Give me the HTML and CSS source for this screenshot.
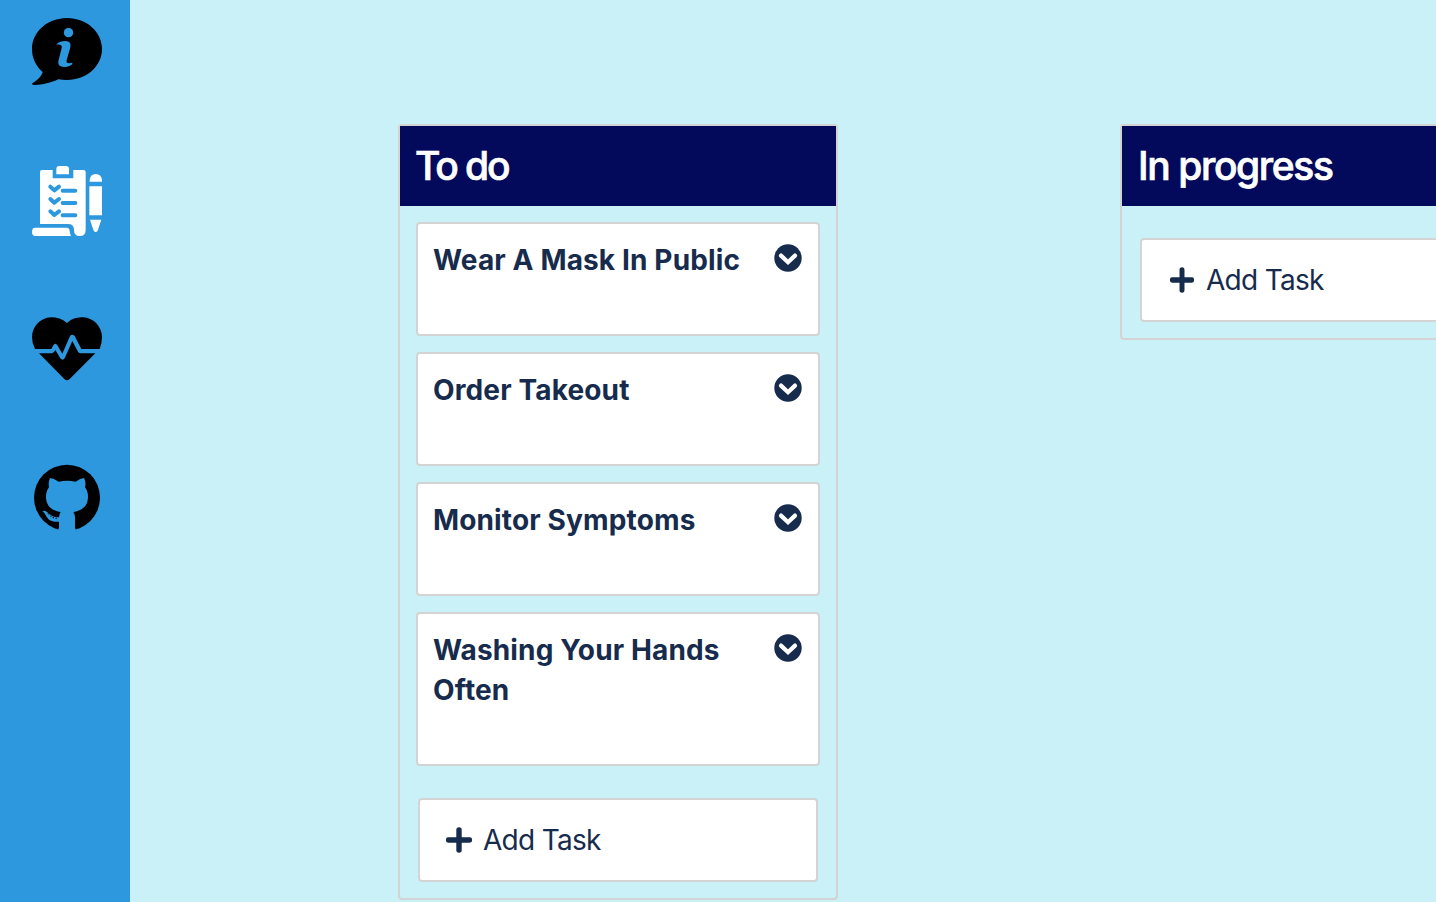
FILE: index.html
```html
<!DOCTYPE html>
<html lang="en">
<head>
<meta charset="utf-8">
<title>Tasks</title>
<link rel="stylesheet" href="styles.css">
</head>
<body>
<svg class="sprite" aria-hidden="true">
  <symbol id="chevron" viewBox="0 0 28 28">
    <circle cx="14" cy="14" r="13.7" fill="#172b4d"/>
    <path d="M7 11.6 14 18.2 21 11.6" fill="none" stroke="#fff" stroke-width="4.2" stroke-linecap="round" stroke-linejoin="miter"/>
  </symbol>
  <symbol id="plus" viewBox="0 0 26 26" preserveAspectRatio="none">
    <path d="M13 3V23M2.5 13H23.5" fill="none" stroke="#172b4d" stroke-width="5.4" stroke-linecap="round"/>
  </symbol>
</svg>
<div class="app">
  <nav class="sidebar">
    <a class="nav-item"><svg class="nav-icon" viewBox="36 24 210 210">
      <path d="M141 24C200 24 246 66 246 117S200 210 141 210C132 210 123 209 115 208C93 218 63 226 42 225Q34 224 38 219C52 211 64 200 68 186C48 168 36 145 36 117C36 66 82 24 141 24Z"/>
      <circle class="cut" cx="145.500" cy="68" r="14"/>
      <path class="cut" d="M109 103Q120 93 137 93Q155 94 151 112L140 151Q138 160 146 160L158 158Q157 164 150 167Q142 171 132 171Q113 171 115 154L124 118Q128 104 119 104Z"/>
    </svg></a>
    <a class="nav-item"><svg class="nav-icon" viewBox="36 30 210 210">
      <g fill="#fff">
        <path d="M66 42H98V67H160V42H191Q197 42 197 48V221Q197 240 179 240Q162 240 162 221Q162 204 144 204H60V48Q60 42 66 42Z"/>
        <path d="M109 55V39Q109 30 118 30H138Q147 30 147 39V55Z"/>
        <path d="M45 215H140Q149 215 149 226Q150 234 153 240H46Q36 240 36 228Q36 215 45 215Z"/>
        <path d="M209 77V72Q211 54 227 54Q244 54 246 72V77ZM208 91H246V178H208ZM210 191H244L233 224Q227 232 221 224Z"/>
      </g>
      <g fill="none" stroke="#2e98de" stroke-width="12" stroke-linecap="round" stroke-linejoin="round">
        <path d="M91 92 103 103 117 92M91 129 103 140 117 129M91 166 103 177 117 166M128 104H166M128 141H166M128 178H166"/>
      </g>
    </svg></a>
    <a class="nav-item"><svg class="nav-icon" viewBox="36 24 210 210">
      <path d="M141 51C158 35 177 34 189 34C222 36 246 62 246 94Q246 113 239 129H184L164 90Q157 83 150 90L127 143 113 119Q106 108 99 119L94 129H45Q36 113 36 94C36 62 60 36 93 34C111 34 126 39 141 51Z"/>
      <path d="M57 142H96Q102 141 106 132L121 157Q128 165 134 157L157 105 174 137Q177 142 183 142H226L149 219Q141 227 133 219Z"/>
    </svg></a>
    <a class="nav-item"><svg class="nav-icon" viewBox="36 18 210 210">
      <circle cx="141" cy="125" r="99"/>
      <path class="cut" d="M111 227 117 216V197C92 199 84 190 78 179Q74 170 67 166Q72 162 80 167C89 173 95 184 117 184Q117 174 122 168C94 164 78 148 78 122Q78 105 87 94Q84 79 90 66Q101 67 116 77Q141 71 167 77Q181 67 192 66Q199 79 195 94Q204 105 204 122C204 149 187 164 160 168Q165 174 165 184V216L171 227Z"/>
      <path d="M82 172 87 177 86 172ZM89 179 94 184 94 179ZM97 184 101 188 102 183ZM105 187 109 190 111 185Z"/>
    </svg></a>
  </nav>
  <main class="board">
    <section class="column">
      <h2 class="column-title title-todo">To do</h2>
      <div class="column-body">
        <article class="card"><h3 class="card-title">Wear A Mask In Public</h3><svg class="chevron"><use href="#chevron"/></svg></article>
        <article class="card"><h3 class="card-title">Order Takeout</h3><svg class="chevron"><use href="#chevron"/></svg></article>
        <article class="card"><h3 class="card-title">Monitor Symptoms</h3><svg class="chevron"><use href="#chevron"/></svg></article>
        <article class="card"><h3 class="card-title">Washing Your Hands Often</h3><svg class="chevron"><use href="#chevron"/></svg></article>
        <button class="add"><svg class="plus"><use href="#plus"/></svg>Add Task</button>
      </div>
    </section>
    <section class="column">
      <h2 class="column-title">In progress</h2>
      <div class="column-body">
        <button class="add add-inset"><svg class="plus plus-narrow"><use href="#plus"/></svg>Add Task</button>
      </div>
    </section>
  </main>
</div>
</body>
</html>
```
FILE: styles.css
```css
* { box-sizing: border-box; }
body {
  margin: 0;
  overflow: hidden;
  background: #caf0f8;
  color: #172b4d;
  font-family: Inter, "Liberation Sans", sans-serif;
}
.sprite { display: block; width: 0; height: 0; }
.app { display: flex; height: 902px; overflow: hidden; }
.sidebar {
  flex: 0 0 130px;
  display: flex;
  flex-direction: column;
  gap: 78px;
  padding: 18px 28px 0 32px;
  background: #2e98de;
}
.nav-item, .nav-icon { display: block; width: 70px; height: 70px; }
.cut { fill: #2e98de; }
.board {
  flex: 1;
  min-width: 0;
  display: flex;
  align-items: flex-start;
  gap: 282px;
  padding: 124px 0 0 268px;
}
.column {
  flex: 0 0 440px;
  border: 2px solid #d3d3d3;
  border-radius: 4px;
}
.column-title {
  height: 80px;
  margin: 0;
  padding: 0 16px;
  background: #030a5c;
  color: #fff;
  font-size: 39px;
  font-weight: 500;
  line-height: 80px;
  letter-spacing: -1.4px;
  -webkit-text-stroke: 0.7px #fff;
}
.title-todo { padding-left: 15px; letter-spacing: -2.1px; }
.column-body {
  display: flex;
  flex-direction: column;
  gap: 16px;
  padding: 16px;
}
.card {
  display: flex;
  justify-content: space-between;
  align-items: flex-start;
  min-height: 114px;
  padding: 16px 16px 54px 15px;
  border: 2px solid #d3d3d3;
  border-radius: 4px;
  background: #fff;
}
.card-title {
  max-width: 320px;
  margin: 0;
  font-size: 28px;
  font-weight: 700;
  line-height: 40px;
  letter-spacing: 0.14px;
}
.chevron { flex: none; width: 28px; height: 28px; margin-top: 4px; }
.add {
  display: flex;
  align-items: center;
  height: 84px;
  margin: 16px 2px 0;
  padding: 0 26px;
  border: 2px solid #d3d3d3;
  border-radius: 4px;
  background: #fff;
  color: #172b4d;
  font: 400 28px/40px Inter, "Liberation Sans", sans-serif;
  letter-spacing: -0.7px;
}
.plus { width: 26px; height: 26px; margin-right: 11px; }
.plus-narrow { width: 24px; margin-right: 12px; }
.add-inset { padding-left: 28px; }
```
